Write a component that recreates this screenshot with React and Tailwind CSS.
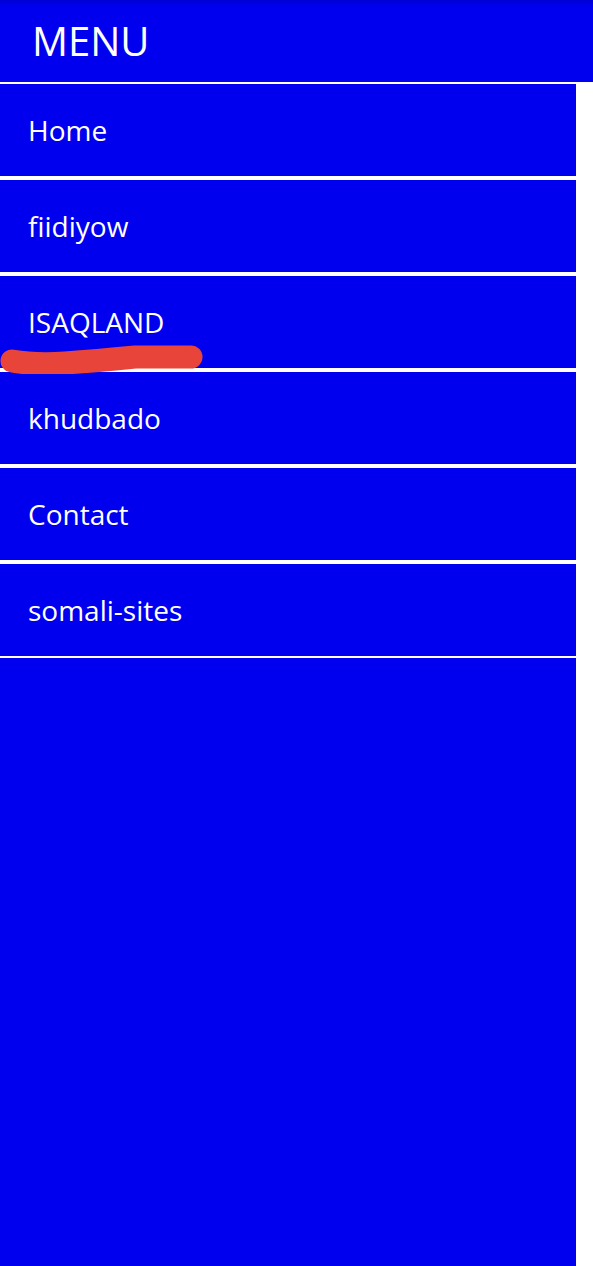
const LINKS = ['Home', 'fiidiyow', 'ISAQLAND', 'khudbado', 'Contact', 'somali-sites'];

export default function App() {
  return (
    <div className="min-h-screen flex flex-col bg-white text-white font-['Open_Sans',sans-serif]">
      <header className="h-[84px] shrink-0 flex items-center pl-8 border-b-2 border-white bg-linear-to-b from-[#0000d2] to-[#0000ee] to-[6%]">
        <h1 className="text-[40px] leading-none font-normal">MENU</h1>
      </header>

      <nav className="relative flex-1 w-[576px] bg-[#0000ee]">
        <ul>
          {LINKS.map((label, i) => (
            <li key={label} className={`border-b-2 border-white ${i > 0 ? 'border-t-2' : ''}`}>
              <a href="#" className="h-[92px] flex items-center pl-7 text-[28px] leading-none">
                {label}
              </a>
            </li>
          ))}
        </ul>

        {/* red marker scribble under ISAQLAND */}
        <svg className="absolute left-0 top-[250px] pointer-events-none" width="220" height="40" viewBox="0 250 220 40">
          <path
            d="M12 277 Q 35 281 65 279 T 135 273 L 191 273"
            fill="none"
            stroke="#e9443a"
            strokeWidth="23"
            strokeLinecap="round"
            strokeLinejoin="round"
          />
        </svg>
      </nav>
    </div>
  );
}
